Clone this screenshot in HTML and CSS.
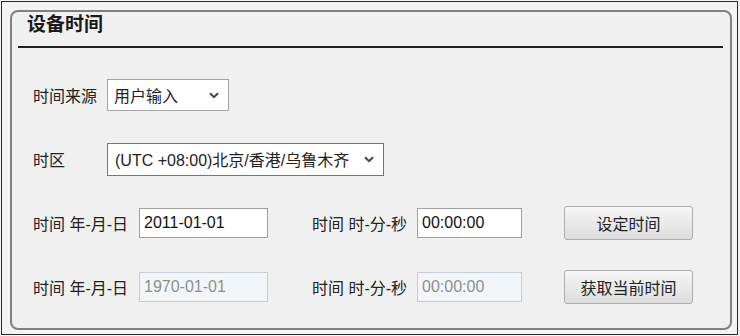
FILE: index.html
```html
<!DOCTYPE html>
<html lang="zh-CN">
<head>
    <meta charset="UTF-8">
    <title>设备时间</title>
    <link rel="stylesheet" href="styles.css">
</head>
<body>
<div class="frame">
    <div class="panel">
        <div class="panel-title">设备时间</div>
        <div class="form">
            <div class="row">
                <span class="label label-short">时间来源</span>
                <div class="select select-source">
                    <span>用户输入</span>
                    <svg class="chevron" width="10" height="7" viewBox="0 0 10 7"><path d="M1 1.2 L5 5.2 L9 1.2" fill="none" stroke="#444" stroke-width="2"/></svg>
                </div>
            </div>
            <div class="row">
                <span class="label label-short">时区</span>
                <div class="select select-zone">
                    <span>(UTC +08:00)北京/香港/乌鲁木齐</span>
                    <svg class="chevron" width="10" height="7" viewBox="0 0 10 7"><path d="M1 1.2 L5 5.2 L9 1.2" fill="none" stroke="#444" stroke-width="2"/></svg>
                </div>
            </div>
            <div class="row">
                <span class="label label-date">时间 年-月-日</span>
                <input class="input input-date" type="text" value="2011-01-01">
                <span class="label label-time">时间 时-分-秒</span>
                <input class="input input-time" type="text" value="00:00:00">
                <button class="btn">设定时间</button>
            </div>
            <div class="row">
                <span class="label label-date">时间 年-月-日</span>
                <input class="input input-date" type="text" value="1970-01-01" disabled>
                <span class="label label-time">时间 时-分-秒</span>
                <input class="input input-time" type="text" value="00:00:00" disabled>
                <button class="btn">获取当前时间</button>
            </div>
        </div>
    </div>
</div>
</body>
</html>
```

FILE: styles.css
```css
body {
    margin: 0;
    background-color: #f3f3f3;
    font-family: "Liberation Sans", "Noto Sans CJK SC", sans-serif;
    font-size: 16px;
    color: #222;
}
.frame {
    box-sizing: border-box;
    margin: 1px;
    width: 737px;
    height: 334px;
    border: solid 1px #2b2b2b;
    padding: 8px 0 0 8px;
    background-color: #f3f3f3;
}
.panel {
    box-sizing: border-box;
    width: 722px;
    height: 320px;
    border: solid 2px #808080;
    border-radius: 8px;
    background-color: #f0f0f0;
}
.panel-title {
    margin: 0 7px 0 6px;
    padding-left: 9px;
    height: 34px;
    line-height: 26px;
    font-size: 19px;
    font-weight: bold;
    color: #1a1a1a;
    border-bottom: solid 2px #222;
}
.form {
    padding-left: 21px;
}
.row {
    display: flex;
    align-items: center;
    height: 34px;
    margin-top: 30px;
}
.label {
    flex-shrink: 0;
    white-space: nowrap;
}
.label-short {
    width: 74px;
}
.label-date {
    width: 106px;
}
.label-time {
    width: 105px;
    margin-left: 44px;
}
.select {
    box-sizing: border-box;
    display: flex;
    align-items: center;
    justify-content: space-between;
    padding: 0 9px 0 6px;
    background-color: white;
    border: solid 1px #a3a3a3;
}
.select-source {
    width: 122px;
    height: 32px;
}
.select-zone {
    width: 277px;
    height: 33px;
    padding-left: 7px;
    border-color: #3b86c8;
}
.chevron {
    display: block;
}
.input {
    box-sizing: border-box;
    height: 30px;
    margin: 0;
    padding: 0 4px;
    font-family: "Liberation Sans", sans-serif;
    font-size: 16px;
    color: #111;
    background-color: white;
    border: solid 1px #a0a0a0;
    outline: none;
}
.input:disabled {
    color: #8e8e8e;
    background-color: #f3f6f9;
    border-color: #c6cdd4;
}
.input-date {
    width: 129px;
}
.input-time {
    width: 105px;
}
.btn {
    box-sizing: border-box;
    width: 129px;
    height: 34px;
    margin-left: 42px;
    padding: 0;
    font-family: "Liberation Sans", "Noto Sans CJK SC", sans-serif;
    font-size: 16px;
    color: #222;
    border: solid 1px #acacac;
    border-radius: 3px;
    background: linear-gradient(#f6f6f6, #dddddd);
}
```
